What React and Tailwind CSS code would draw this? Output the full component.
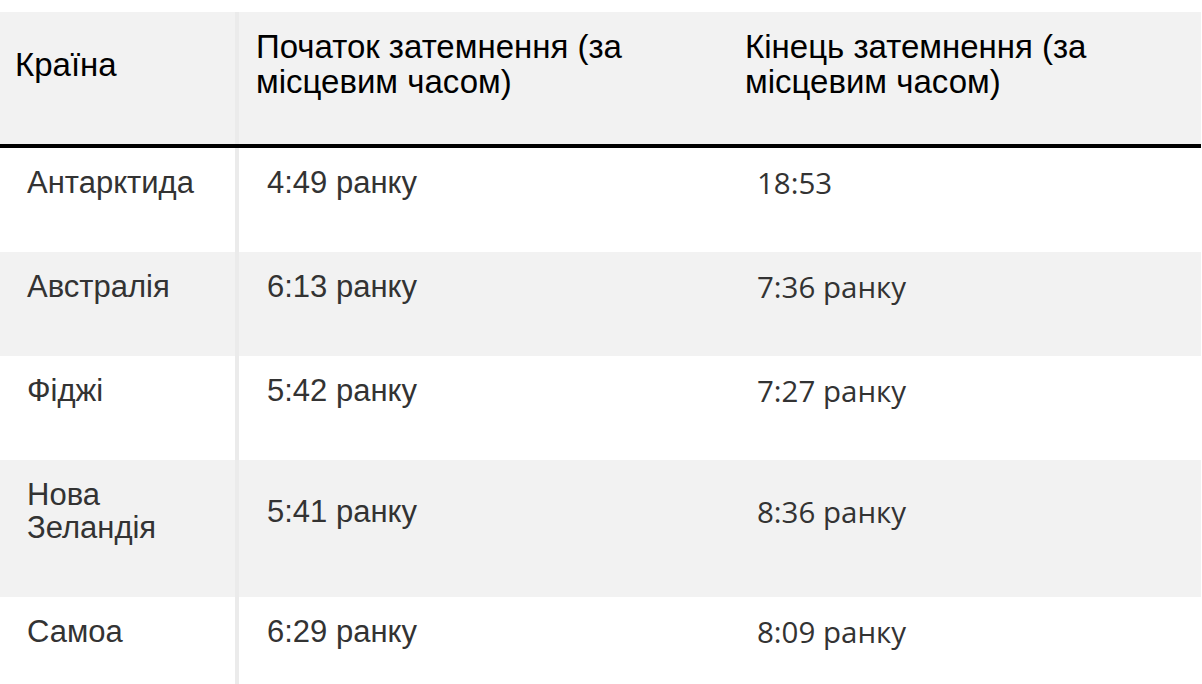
import React from "react";

const rows = [
  ["Антарктида", "4:49 ранку", "18:53"],
  ["Австралія", "6:13 ранку", "7:36 ранку"],
  ["Фіджі", "5:42 ранку", "7:27 ранку"],
  ["Нова Зеландія", "5:41 ранку", "8:36 ранку"],
  ["Самоа", "6:29 ранку", "8:09 ранку"],
];

export default function App() {
  return (
    <div className="bg-white pt-[12px] w-[1202px]">
      <div className="w-[1201px]">
        <div className="grid grid-cols-[239px_490px_472px] bg-[#f2f2f2] border-b-[4px] border-black text-black text-[33px] leading-[35px] font-['Liberation_Sans',Arial,sans-serif]">
          <div className="border-r-[4px] border-[#ebebeb] pl-[15px] pr-[16px] pt-[17px] pb-[45px] flex items-center">
            Країна
          </div>
          <div className="pl-[17px] pr-[17px] pt-[17px] pb-[45px] flex items-center">
            Початок затемнення (за місцевим часом)
          </div>
          <div className="pl-[16px] pr-[17px] pt-[17px] pb-[45px] flex items-center">
            Кінець затемнення (за місцевим часом)
          </div>
        </div>
        {rows.map((r, i) => (
          <div
            key={i}
            className={`grid grid-cols-[239px_490px_472px] text-[#333333] leading-[33px] ${
              i % 2 === 1 ? "bg-[#f2f2f2]" : "bg-white"
            }`}
          >
            <div className="border-r-[4px] border-[#ebebeb] pl-[27px] pr-[16px] pt-[18px] pb-[53px] flex items-center text-[31px] font-['Liberation_Sans',Arial,sans-serif]">
              {r[0]}
            </div>
            <div className="pl-[28px] pr-[16px] pt-[18px] pb-[53px] flex items-center text-[31px] font-['Liberation_Sans',Arial,sans-serif]">
              {r[1]}
            </div>
            <div className="pl-[28px] pr-[16px] pt-[18px] pb-[53px] flex items-center text-[29.5px] font-['Open_Sans',sans-serif]">
              {r[2]}
            </div>
          </div>
        ))}
      </div>
    </div>
  );
}
